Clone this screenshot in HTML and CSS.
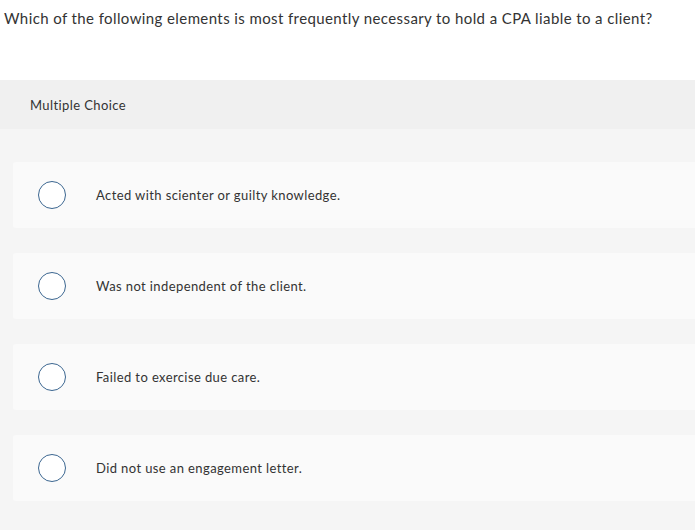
FILE: index.html
```html
<!DOCTYPE html>
<html>
<head>
<meta charset="utf-8">
<link rel="stylesheet" href="styles.css">
</head>
<body>
<div class="question">Which of the following elements is most frequently necessary to hold a CPA liable to a client?</div>
<div class="type-bar">Multiple Choice</div>
<div class="answers">
  <div class="choice"><span class="radio"></span><span class="label">Acted with scienter or guilty knowledge.</span></div>
  <div class="choice"><span class="radio"></span><span class="label">Was not independent of the client.</span></div>
  <div class="choice"><span class="radio"></span><span class="label">Failed to exercise due care.</span></div>
  <div class="choice"><span class="radio"></span><span class="label">Did not use an engagement letter.</span></div>
</div>
</body>
</html>
```
FILE: styles.css
```css
html, body {
  margin: 0;
  padding: 0;
  background: #f5f5f5;
}
body {
  font-family: Lato, "Open Sans", sans-serif;
  color: #333333;
  letter-spacing: 0.4px;
}
.question {
  background: #ffffff;
  height: 80px;
  box-sizing: border-box;
  padding: 8px 0 0 4px;
  font-size: 15px;
  line-height: 20px;
}
.type-bar {
  background: #f0f0f0;
  height: 49px;
  box-sizing: border-box;
  padding-left: 30px;
  display: flex;
  align-items: center;
  font-size: 13px;
}
.answers {
  display: flex;
  flex-direction: column;
  gap: 25px;
  padding: 33px 0 29px 13px;
}
.choice {
  background: #fafafa;
  height: 66px;
  border-radius: 3px 0 0 3px;
  display: flex;
  align-items: center;
  padding-left: 25px;
}
.radio {
  width: 28px;
  height: 28px;
  box-sizing: border-box;
  border: 1.5px solid #3b6690;
  border-radius: 50%;
  background: #ffffff;
  flex: none;
}
.label {
  margin-left: 30px;
  font-size: 13px;
}
```
